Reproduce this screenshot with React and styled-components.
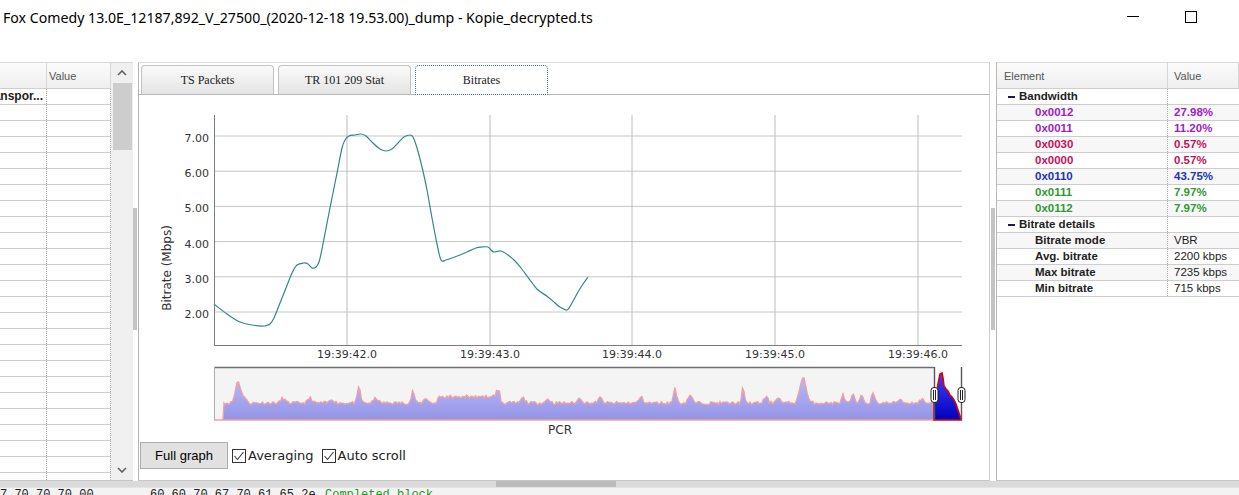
import React from "react";
import styled, { createGlobalStyle } from "styled-components";

const GlobalStyle = createGlobalStyle`
  html, body {
    margin: 0;
    padding: 0;
    background: #fff;
  }
  body {
    font-family: "Liberation Sans", Arial, sans-serif;
  }
`;

// ---- data ----

const curve = [
  [214, 304], [227, 314], [240, 322], [252, 325], [264, 326], [270, 324], [274, 318],
  [280, 303], [286, 288], [292, 273], [297, 265], [304, 263], [308, 264], [312, 268],
  [316, 267], [319, 262], [322, 249], [328, 218], [334, 188], [338, 168], [342, 148],
  [345, 140], [349, 136], [355, 135], [361, 134], [366, 136], [373, 143], [380, 149],
  [386, 151], [392, 149], [398, 143], [404, 137], [410, 135], [413, 137], [417, 148],
  [422, 167], [427, 190], [432, 218], [437, 244], [441, 260], [446, 260], [452, 258],
  [460, 255], [467, 252], [476, 248], [482, 247], [488, 247], [491, 250], [494, 252],
  [501, 251], [508, 255], [515, 261], [521, 268], [527, 276], [533, 284], [538, 290],
  [548, 297], [555, 303], [560, 307], [567, 310], [572, 303], [578, 292], [583, 284],
  [588, 277],
];

const smoothPath = (pts) => {
  let d = `M${pts[0][0]},${pts[0][1]}`;
  for (let i = 0; i < pts.length - 1; i++) {
    const p0 = pts[i - 1] || pts[i];
    const p1 = pts[i];
    const p2 = pts[i + 1];
    const p3 = pts[i + 2] || p2;
    const c1x = p1[0] + (p2[0] - p0[0]) / 6;
    const c1y = p1[1] + (p2[1] - p0[1]) / 6;
    const c2x = p2[0] - (p3[0] - p1[0]) / 6;
    const c2y = p2[1] - (p3[1] - p1[1]) / 6;
    d += ` C${c1x.toFixed(1)},${c1y.toFixed(1)} ${c2x.toFixed(1)},${c2y.toFixed(1)} ${p2[0]},${p2[1]}`;
  }
  return d;
};

const spikes = [
  [238, 22, 2.5], [244, 6, 2], [283, 5, 2], [310, 5, 2], [332, 4, 2], [359, 16, 1.5],
  [376, 5, 2], [413, 12, 1.5], [426, 5, 2], [498, 7, 2], [523, 5, 2], [548, 4, 2],
  [580, 5, 2], [600, 5, 2], [641, 6, 2], [675, 15, 1.5], [690, 8, 2], [743, 15, 1.2],
  [766, 6, 2], [778, 6, 2], [803, 26, 3], [843, 8, 1.5], [853, 8, 1.5], [862, 8, 1.5],
  [873, 10, 1.5], [900, 4, 2], [922, 4, 2],
];

const overviewPath = () => {
  let seed = 11;
  const rand = () => {
    seed = (seed * 16807) % 2147483647;
    return seed / 2147483647;
  };
  let d = "M214,420 L223,420 L224,403";
  for (let x = 225; x <= 933; x += 1.5) {
    let y = 404.5 - rand() * 3;
    if (x > 437 && x < 500) y -= 5 + rand() * 2;
    spikes.forEach(([sx, h, w]) => {
      const dx = x - sx;
      y -= h * Math.exp(-(dx * dx) / (2 * w * w));
    });
    d += ` L${x.toFixed(1)},${y.toFixed(1)}`;
  }
  d += " L934,420 Z";
  return d;
};

const selPath =
  "M934,420 L934,402 L936,396 L938,384 L940,374 L942,373 L943,378 L944,386 L946,389 L948,391 L950,395 L952,397 L954,400 L956,404 L958,410 L960,416 L961,420 Z";

const yTicks = [7, 6, 5, 4, 3, 2];
const yOf = (v) => 312 - (v - 2) * 35.2;
const xTicks = [
  [347, "19:39:42.0"],
  [490, "19:39:43.0"],
  [632, "19:39:44.0"],
  [775, "19:39:45.0"],
  [918, "19:39:46.0"],
];

const bandwidth = [
  { pid: "0x0012", value: "27.98%", color: "#a020c8" },
  { pid: "0x0011", value: "11.20%", color: "#a020c8" },
  { pid: "0x0030", value: "0.57%", color: "#c8105a" },
  { pid: "0x0000", value: "0.57%", color: "#c8105a" },
  { pid: "0x0110", value: "43.75%", color: "#2030c0" },
  { pid: "0x0111", value: "7.97%", color: "#2f9a2f" },
  { pid: "0x0112", value: "7.97%", color: "#2f9a2f" },
];

const details = [
  ["Bitrate mode", "VBR"],
  ["Avg. bitrate", "2200 kbps"],
  ["Max bitrate", "7235 kbps"],
  ["Min bitrate", "715 kbps"],
];

// ---- chrome ----

const Window = styled.div`
  width: 1239px;
  height: 495px;
  overflow: hidden;
  display: flex;
  flex-direction: column;
  background: #fff;
`;

const TitleBar = styled.div`
  height: 62px;
  flex: none;
  display: flex;
  align-items: flex-start;
  padding: 8px 42px 0 3px;
  box-sizing: border-box;
`;

const Title = styled.div`
  flex: 1;
  font-family: "Noto Sans", "Open Sans", sans-serif;
  font-size: 14.15px;
  line-height: 20px;
  color: #000;
  white-space: nowrap;
`;

const MinGlyph = styled.span`
  width: 12px;
  height: 1px;
  margin-top: 8px;
  background: #000;
`;

const MaxGlyph = styled.span`
  width: 10px;
  height: 10px;
  margin: 3px 0 0 46px;
  border: 1px solid #000;
`;

const Workspace = styled.div`
  height: 419px;
  flex: none;
  display: flex;
`;

// ---- left tree ----

const LeftPanel = styled.div`
  width: 133px;
  flex: none;
  display: flex;
  border-top: 1px solid #d8d8d8;
  border-bottom: 1px solid #c6c6c6;
  box-sizing: border-box;
  overflow: hidden;
`;

const LeftGrid = styled.div`
  width: 111px;
  flex: none;
  display: flex;
  flex-direction: column;
  overflow: hidden;
`;

const HeadRow = styled.div`
  height: 25px;
  flex: none;
  display: grid;
  grid-template-columns: ${(p) => p.$cols};
  background: linear-gradient(#fbfbfb, #efefef);
  border-bottom: 1px solid #cfcfcf;
  font-size: 11px;
  color: #555;
`;

const HeadCell = styled.div`
  display: flex;
  align-items: center;
  padding-left: ${(p) => p.$pad || 3}px;
  border-right: 1px solid #d6d6d6;
`;

const TreeRow = styled.div`
  height: 16px;
  flex: none;
  box-sizing: border-box;
  display: grid;
  grid-template-columns: ${(p) => p.$cols};
  border-bottom: 1px solid #cdcdcd;
  background: ${(p) => (p.$alt ? "#f7f7f7" : "#fff")};
  font-size: 11.5px;
  line-height: 15px;
`;

const ClipCell = styled.div`
  display: flex;
  justify-content: flex-end;
  overflow: hidden;
  padding-right: 3px;
  border-right: 1px dotted #a8a8a8;
  font-weight: bold;
  font-size: 12px;
  color: #222;
  white-space: nowrap;
`;

const PlainCell = styled.div`
  border-right: 1px dotted #a8a8a8;
`;

const VScroll = styled.div`
  width: 22px;
  flex: none;
  display: flex;
  flex-direction: column;
  align-items: center;
  background: #f0f0f0;
`;

const ArrowBox = styled.div`
  height: 20px;
  flex: none;
  display: flex;
  align-items: center;
  justify-content: center;
`;

const Thumb = styled.div`
  width: 19px;
  height: 67px;
  flex: none;
  background: #cdcdcd;
`;

const ScrollGap = styled.div`
  flex: 1;
`;

const Splitter = styled.div`
  width: ${(p) => p.$w}px;
  flex: none;
  display: flex;
  justify-content: ${(p) => p.$side};
  background: #fff;
`;

const Grip = styled.div`
  width: 4px;
  height: 122px;
  margin-top: 146px;
  background: #c4c4c4;
`;

// ---- center ----

const CenterPanel = styled.div`
  width: 852px;
  flex: none;
  display: flex;
  flex-direction: column;
  border-left: 1px solid #b4b4b4;
  border-top: 1px solid #dcdcdc;
  border-right: 1px solid #cfcfcf;
  border-bottom: 1px solid #c6c6c6;
  box-sizing: border-box;
`;

const TabStrip = styled.div`
  height: 31px;
  flex: none;
  display: flex;
  align-items: flex-end;
  gap: 4px;
  padding-left: 2px;
  border-bottom: 1px solid #b8b8b8;
`;

const Tab = styled.div`
  width: 133px;
  box-sizing: border-box;
  display: flex;
  align-items: center;
  justify-content: center;
  font-family: "Liberation Serif", "Times New Roman", serif;
  font-size: 12px;
  color: #222;
  border-radius: 4px 4px 0 0;
  border: 1px solid ${(p) => (p.$active ? "transparent" : "#c2c2c2")};
  border-bottom: none;
  background: ${(p) => (p.$active ? "#fff" : "linear-gradient(#fafafa, #e4e4e4)")};
  outline: ${(p) => (p.$active ? "1px dotted #4f6f8f" : "none")};
  outline-offset: -1px;
  margin-bottom: ${(p) => (p.$active ? "-1px" : "0")};
  height: ${(p) => (p.$active ? "30px" : "29px")};
`;

const ChartSvg = styled.svg`
  display: block;
  flex: none;
  font-family: "DejaVu Sans", Verdana, sans-serif;
`;

const ControlRow = styled.div`
  height: 27px;
  flex: none;
  margin-top: 2px;
  padding-left: 1px;
  display: flex;
  align-items: center;
`;

const Button = styled.button`
  width: 88px;
  height: 27px;
  margin: 0;
  padding: 0;
  background: #e1e1e1;
  border: 1px solid #adadad;
  font-family: "Liberation Sans", Arial, sans-serif;
  font-size: 13px;
  color: #000;
`;

const Check = styled.label`
  display: flex;
  align-items: center;
  margin-left: ${(p) => p.$gap}px;
  font-family: "DejaVu Sans", Verdana, sans-serif;
  font-size: 13px;
  color: #222;
`;

const Box = styled.span`
  width: 14px;
  height: 14px;
  box-sizing: border-box;
  border: 1px solid #333;
  background: #fff;
  margin-right: 2px;
  display: flex;
  align-items: center;
  justify-content: center;
`;

// ---- right tree ----

const RightPanel = styled.div`
  flex: 1;
  display: flex;
  flex-direction: column;
  border-left: 1px solid #b8b8b8;
  border-top: 1px solid #d8d8d8;
  border-bottom: 1px solid #c6c6c6;
  box-sizing: border-box;
  overflow: hidden;
`;

const NameCell = styled.div`
  display: flex;
  align-items: center;
  padding-left: ${(p) => p.$indent}px;
  border-right: 1px dotted #a8a8a8;
  font-weight: bold;
  color: ${(p) => p.$color || "#222"};
  white-space: nowrap;
`;

const ValueCell = styled.div`
  padding-left: 6px;
  font-weight: ${(p) => (p.$bold ? "bold" : "normal")};
  color: ${(p) => p.$color || "#222"};
  white-space: nowrap;
`;

const Minus = styled.span`
  width: 7px;
  height: 2px;
  background: #1c1c4c;
  margin-right: 4px;
`;

// ---- bottom ----

const HScroll = styled.div`
  height: 6px;
  flex: none;
  display: flex;
  background: #dadada;
  border-bottom: 1px solid #e4e4e4;
`;

const HThumb = styled.div`
  width: 120px;
  margin-left: 496px;
  background: #bcbcbc;
`;

const HexLine = styled.div`
  flex: 1;
  display: flex;
  background: #f3f3f3;
  font-family: "Liberation Mono", "Courier New", monospace;
  font-size: 12px;
  line-height: 14px;
  color: #222;
  white-space: nowrap;
  overflow: hidden;
`;

const HexChunk = styled.span`
  width: ${(p) => p.$w}px;
  flex: none;
  color: ${(p) => p.$color || "#222"};
`;

const Chevron = ({ up }) => (
  <svg width="10" height="6" viewBox="0 0 10 6">
    <polyline
      points={up ? "1,5 5,1 9,5" : "1,1 5,5 9,1"}
      fill="none"
      stroke="#606060"
      strokeWidth="1.6"
    />
  </svg>
);

const Tick = () => (
  <svg width="12" height="12" viewBox="0 0 12 12">
    <polyline points="1.5,6 4.5,9.5 10.5,2" fill="none" stroke="#333" strokeWidth="1.1" />
  </svg>
);

function Chart() {
  return (
    <ChartSvg width="850" height="345" viewBox="139 95 850 345">
      <defs>
        <linearGradient id="ovFill" x1="0" y1="0" x2="0" y2="1">
          <stop offset="0" stopColor="#b8b8fb" />
          <stop offset="1" stopColor="#9494e6" />
        </linearGradient>
        <linearGradient id="selFill" x1="0" y1="0" x2="0" y2="1">
          <stop offset="0" stopColor="#4040ff" />
          <stop offset="1" stopColor="#0000b8" />
        </linearGradient>
      </defs>

      {yTicks.map((v) => (
        <g key={v}>
          <line x1="214" x2="962" y1={yOf(v)} y2={yOf(v)} stroke="#c6c6c6" />
          <text x="209" y={yOf(v) + 6} textAnchor="end" fontSize="11" fill="#333">
            {v.toFixed(2)}
          </text>
        </g>
      ))}
      {xTicks.map(([x, label]) => (
        <g key={label}>
          <line x1={x} x2={x} y1="115" y2="345" stroke="#bcbcbc" />
          <text x={x} y="358" textAnchor="middle" fontSize="11" fill="#333">
            {label}
          </text>
        </g>
      ))}
      <line x1="214.5" x2="214.5" y1="115" y2="345.5" stroke="#7c7c7c" />
      <line x1="214" x2="962" y1="345.5" y2="345.5" stroke="#7c7c7c" />
      <text
        transform="translate(171 268) rotate(-90)"
        textAnchor="middle"
        fontSize="12"
        fill="#333"
      >
        Bitrate (Mbps)
      </text>
      <path d={smoothPath(curve)} fill="none" stroke="#2f8a88" strokeWidth="1.2" />

      <rect x="214" y="367" width="720" height="53" fill="#f4f4f4" />
      <path d={overviewPath()} fill="url(#ovFill)" stroke="#f2a0a0" strokeWidth="1.3" />
      <line x1="214" x2="934" y1="367.5" y2="367.5" stroke="#6e6e6e" strokeWidth="1.5" />
      <line x1="214.5" x2="214.5" y1="367" y2="420" stroke="#b0b0b0" />
      <path d={selPath} fill="url(#selFill)" stroke="#e00000" strokeWidth="1.6" />
      <line x1="934.5" x2="934.5" y1="367" y2="420" stroke="#555" strokeWidth="1.4" />
      <line x1="961.5" x2="961.5" y1="367" y2="420" stroke="#555" strokeWidth="1.4" />
      {[931, 958].map((x) => (
        <g key={x}>
          <rect x={x} y="387.5" width="7" height="15" rx="3" fill="#fff" stroke="#222" />
          <line x1={x + 2.5} x2={x + 2.5} y1="390" y2="400" stroke="#222" />
          <line x1={x + 4.5} x2={x + 4.5} y1="390" y2="400" stroke="#222" />
        </g>
      ))}
      <text x="560" y="434" textAnchor="middle" fontSize="12" fill="#333">
        PCR
      </text>
    </ChartSvg>
  );
}

export default function App() {
  const leftRows = Array.from({ length: 25 }, (_, i) => i);
  const rightCols = "171px 1fr";

  return (
    <Window>
      <GlobalStyle />
      <TitleBar>
        <Title>Fox Comedy 13.0E_12187,892_V_27500_(2020-12-18 19.53.00)_dump - Kopie_decrypted.ts</Title>
        <MinGlyph />
        <MaxGlyph />
      </TitleBar>

      <Workspace>
        <LeftPanel>
          <LeftGrid>
            <HeadRow $cols="47px 64px">
              <HeadCell />
              <HeadCell $pad={2}>Value</HeadCell>
            </HeadRow>
            {leftRows.map((i) => (
              <TreeRow key={i} $cols="47px 64px">
                <ClipCell>{i === 0 ? "Transpor..." : ""}</ClipCell>
                <PlainCell />
              </TreeRow>
            ))}
          </LeftGrid>
          <VScroll>
            <ArrowBox>
              <Chevron up />
            </ArrowBox>
            <Thumb />
            <ScrollGap />
            <ArrowBox>
              <Chevron />
            </ArrowBox>
          </VScroll>
        </LeftPanel>
        <Splitter $w={5} $side="flex-start">
          <Grip />
        </Splitter>

        <CenterPanel>
          <TabStrip>
            <Tab>TS Packets</Tab>
            <Tab>TR 101 209 Stat</Tab>
            <Tab $active>Bitrates</Tab>
          </TabStrip>
          <Chart />
          <ControlRow>
            <Button>Full graph</Button>
            <Check $gap={4}>
              <Box>
                <Tick />
              </Box>
              Averaging
            </Check>
            <Check $gap={8}>
              <Box>
                <Tick />
              </Box>
              Auto scroll
            </Check>
          </ControlRow>
        </CenterPanel>
        <Splitter $w={6} $side="center">
          <Grip />
        </Splitter>

        <RightPanel>
          <HeadRow $cols={rightCols}>
            <HeadCell $pad={7}>Element</HeadCell>
            <HeadCell $pad={6}>Value</HeadCell>
          </HeadRow>
          <TreeRow $cols={rightCols}>
            <NameCell $indent={11}>
              <Minus />
              Bandwidth
            </NameCell>
            <ValueCell />
          </TreeRow>
          {bandwidth.map((b, i) => (
            <TreeRow key={b.pid} $cols={rightCols} $alt={i % 2 === 0}>
              <NameCell $indent={38} $color={b.color}>
                {b.pid}
              </NameCell>
              <ValueCell $bold $color={b.color}>
                {b.value}
              </ValueCell>
            </TreeRow>
          ))}
          <TreeRow $cols={rightCols}>
            <NameCell $indent={11}>
              <Minus />
              Bitrate details
            </NameCell>
            <ValueCell />
          </TreeRow>
          {details.map(([k, v], i) => (
            <TreeRow key={k} $cols={rightCols} $alt={i % 2 === 0}>
              <NameCell $indent={38}>{k}</NameCell>
              <ValueCell>{v}</ValueCell>
            </TreeRow>
          ))}
        </RightPanel>
      </Workspace>

      <HScroll>
        <HThumb />
      </HScroll>
      <HexLine>
        <HexChunk $w={150}>7 70 70 70 00</HexChunk>
        <HexChunk $w={175}>60 60 70 67 70 61 65 2e</HexChunk>
        <HexChunk $color="#1a9a1a">Completed block</HexChunk>
      </HexLine>
    </Window>
  );
}
